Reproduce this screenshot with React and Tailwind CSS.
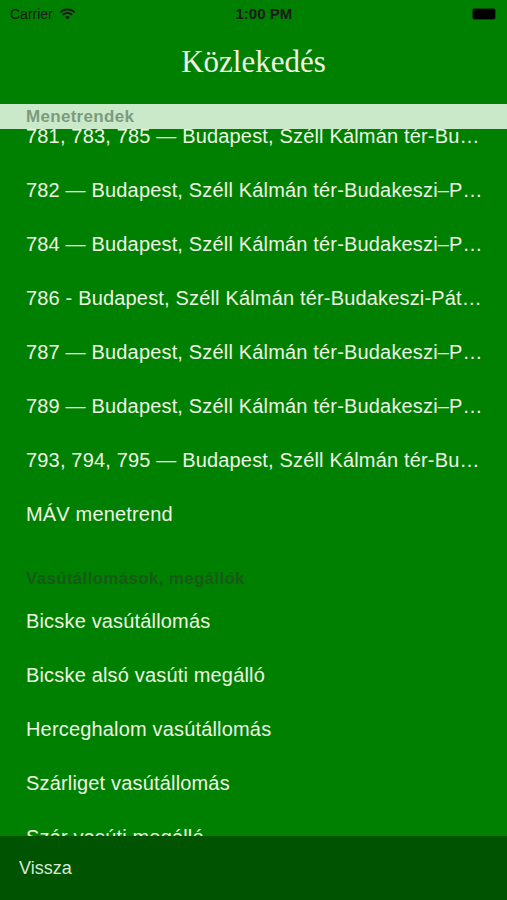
import React from 'react';

const timetables = [
  '781, 783, 785 — Budapest, Széll Kálmán tér-Budakeszi–Páty–Telki',
  '782 — Budapest, Széll Kálmán tér-Budakeszi–Páty–Telki',
  '784 — Budapest, Széll Kálmán tér-Budakeszi–Páty–Telki',
  '786 - Budapest, Széll Kálmán tér-Budakeszi-Páty-Telki',
  '787 — Budapest, Széll Kálmán tér-Budakeszi–Páty–Telki',
  '789 — Budapest, Széll Kálmán tér-Budakeszi–Páty–Telki',
  '793, 794, 795 — Budapest, Széll Kálmán tér-Budakeszi–Páty',
  'MÁV menetrend',
];

const stations = [
  'Bicske vasútállomás',
  'Bicske alsó vasúti megálló',
  'Herceghalom vasútállomás',
  'Szárliget vasútállomás',
  'Szár vasúti megálló',
];

const Row = ({ label }) => (
  <div className="h-[54px] flex items-center pl-[26px] pr-[24px]">
    <span className="truncate text-[20px] tracking-[0.17px] text-[#eef5e4]">{label}</span>
  </div>
);

const App = () => {
  return (
    <div
      className="w-[507px] h-[900px] bg-[#008000] flex flex-col overflow-hidden"
      style={{ fontFamily: '"Liberation Sans", Arial, sans-serif' }}
    >
      {/* Status bar */}
      <div className="h-[28px] flex items-center justify-between px-[10px] text-[#1b1b1b]">
        <div className="flex items-center gap-[6px] text-[14px]">
          <span>Carrier</span>
          <svg width="17" height="12" viewBox="0 0 17 12">
            <path d="M8.5 2.5c2.5 0 4.8 1 6.5 2.6l1.3-1.4C14.3 1.8 11.5.6 8.5.6S2.7 1.8.7 3.7L2 5.1c1.7-1.6 4-2.6 6.5-2.6z" fill="#1b1b1b" />
            <path d="M8.5 6c1.5 0 2.9.6 4 1.6l1.3-1.4C12.4 4.9 10.5 4.1 8.5 4.1S4.6 4.9 3.2 6.2l1.3 1.4C5.6 6.6 7 6 8.5 6z" fill="#1b1b1b" />
            <path d="M8.5 11.6l2.5-2.6c-.7-.6-1.6-1-2.5-1s-1.8.4-2.5 1z" fill="#1b1b1b" />
          </svg>
        </div>
        <span className="text-[15px] font-bold -ml-[20px]">1:00 PM</span>
        <div className="w-[24px] h-[12px] rounded-[3px] bg-black mr-[1px] border border-[#0a4a0a]" />
      </div>

      {/* Navigation title */}
      <div className="h-[76px] flex items-center justify-center pb-[8px]">
        <h1
          className="text-[31px] text-[#f2f2e4]"
          style={{ fontFamily: '"Liberation Serif", "Times New Roman", serif' }}
        >
          Közlekedés
        </h1>
      </div>

      {/* List */}
      <div className="relative flex-1 overflow-hidden">
        <div className="absolute top-0 left-0 right-0 h-[25px] bg-[#c9e9c9] flex items-center pl-[26px] z-10">
          <span className="text-[17px] font-semibold tracking-[0.3px] text-[#7d9a7d]">Menetrendek</span>
        </div>
        <div className="pt-[5px]">
          {timetables.map((t) => (
            <Row key={t} label={t} />
          ))}
          <div className="h-[53px] flex items-end pl-[26px] pb-[3px]">
            <span className="text-[17px] font-semibold tracking-[0.3px] text-[#175a17]">Vasútállomások, megállók</span>
          </div>
          {stations.map((s) => (
            <Row key={s} label={s} />
          ))}
        </div>
      </div>

      {/* Bottom bar */}
      <div className="h-[64px] bg-[#005300] flex items-center pl-[19px]">
        <span className="text-[18px] text-[#d6ead6]">Vissza</span>
      </div>
    </div>
  );
};

export default App;
